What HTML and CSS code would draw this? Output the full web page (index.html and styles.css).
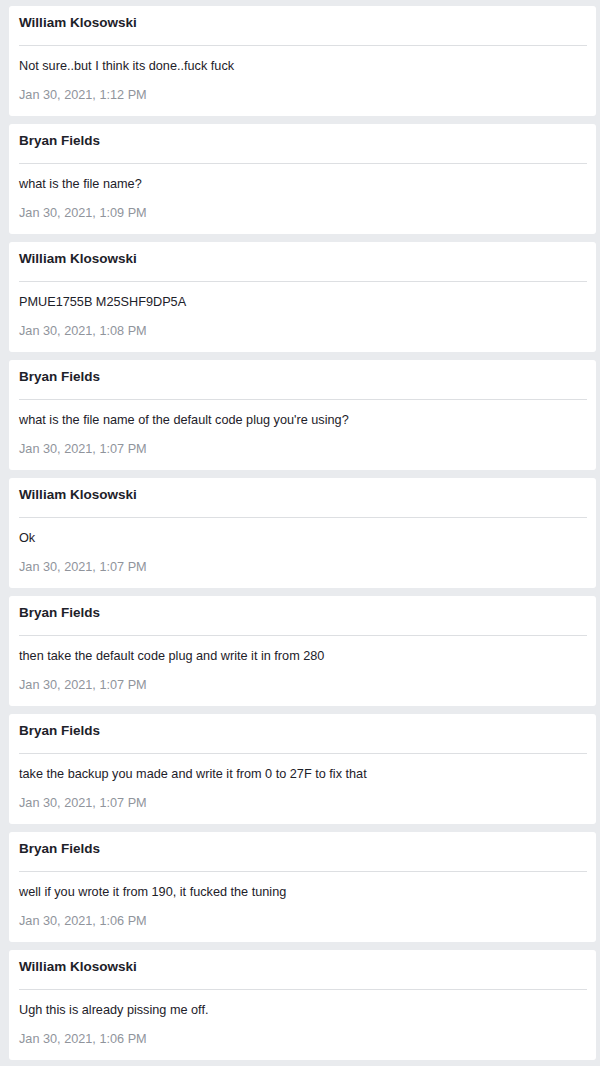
FILE: index.html
```html
<!DOCTYPE html>
<html>
<head>
<meta charset="utf-8">
<link rel="stylesheet" href="styles.css">
</head>
<body>
<div class="feed">
  <div class="card">
    <div class="name">William Klosowski</div>
    <div class="msg">Not sure..but I think its done..fuck fuck</div>
    <div class="date">Jan 30, 2021, 1:12 PM</div>
  </div>
  <div class="card">
    <div class="name">Bryan Fields</div>
    <div class="msg">what is the file name?</div>
    <div class="date">Jan 30, 2021, 1:09 PM</div>
  </div>
  <div class="card">
    <div class="name">William Klosowski</div>
    <div class="msg">PMUE1755B M25SHF9DP5A</div>
    <div class="date">Jan 30, 2021, 1:08 PM</div>
  </div>
  <div class="card">
    <div class="name">Bryan Fields</div>
    <div class="msg">what is the file name of the default code plug you're using?</div>
    <div class="date">Jan 30, 2021, 1:07 PM</div>
  </div>
  <div class="card">
    <div class="name">William Klosowski</div>
    <div class="msg">Ok</div>
    <div class="date">Jan 30, 2021, 1:07 PM</div>
  </div>
  <div class="card">
    <div class="name">Bryan Fields</div>
    <div class="msg">then take the default code plug and write it in from 280</div>
    <div class="date">Jan 30, 2021, 1:07 PM</div>
  </div>
  <div class="card">
    <div class="name">Bryan Fields</div>
    <div class="msg">take the backup you made and write it from 0 to 27F to fix that</div>
    <div class="date">Jan 30, 2021, 1:07 PM</div>
  </div>
  <div class="card">
    <div class="name">Bryan Fields</div>
    <div class="msg">well if you wrote it from 190, it fucked the tuning</div>
    <div class="date">Jan 30, 2021, 1:06 PM</div>
  </div>
  <div class="card">
    <div class="name">William Klosowski</div>
    <div class="msg">Ugh this is already pissing me off.</div>
    <div class="date">Jan 30, 2021, 1:06 PM</div>
  </div>
</div>
</body>
</html>
```
FILE: styles.css
```css
html, body {
  margin: 0;
  padding: 0;
  background: #e9ebee;
}
body {
  font-family: "Liberation Sans", Arial, Helvetica, sans-serif;
  color: #1d2129;
}
.feed {
  display: flex;
  flex-direction: column;
  gap: 8px;
  padding: 6px 4px 6px 9px;
}
.card {
  background: #ffffff;
  border-radius: 3px;
  height: 110px;
  box-sizing: border-box;
  padding: 8px 9px 0 10px;
}
.name {
  font-size: 13.5px;
  line-height: 18px;
  font-weight: bold;
  padding-bottom: 13px;
  border-bottom: 1px solid #dddfe2;
}
.msg {
  font-size: 12.7px;
  line-height: 16px;
  margin-top: 12px;
}
.date {
  font-size: 12.7px;
  line-height: 16px;
  margin-top: 13px;
  color: #90949c;
}
```
